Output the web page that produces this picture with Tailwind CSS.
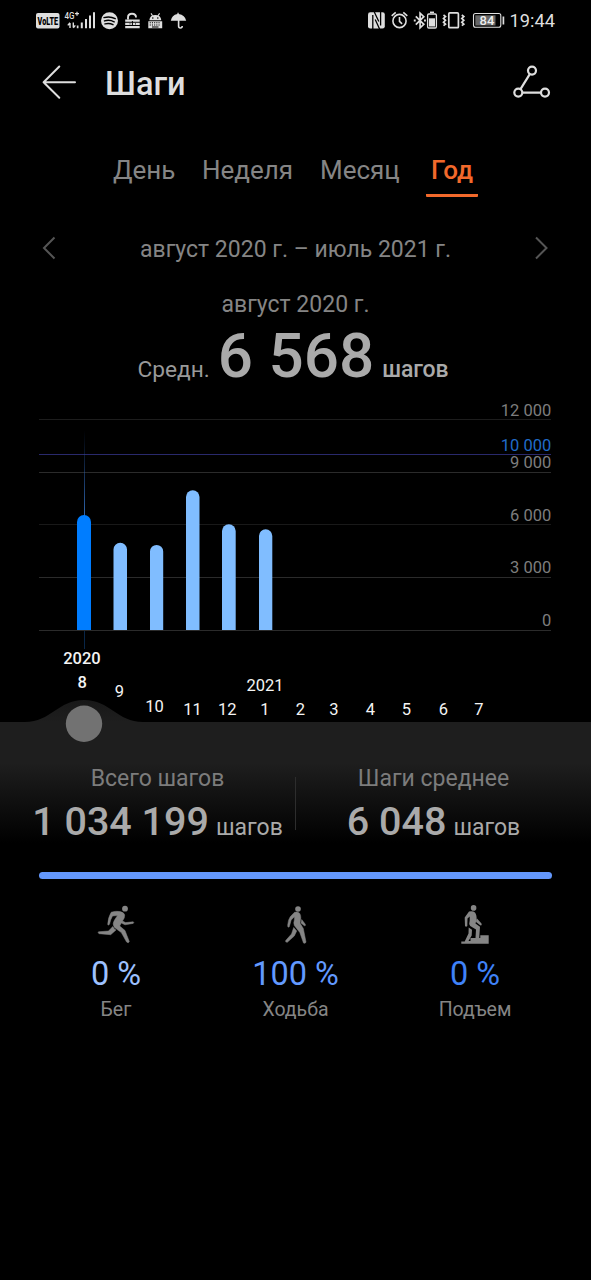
<!DOCTYPE html>
<html lang="ru">
<head>
    <meta charset="UTF-8">
    <meta name="viewport" content="width=device-width, initial-scale=1.0">
    <title>Шаги</title>
    <script src="https://cdn.jsdelivr.net/npm/@tailwindcss/browser@4"></script>
</head>
<body class="bg-black">
    <div class="w-[591px] h-[1280px] bg-black text-[#858585] font-[Roboto,sans-serif] overflow-hidden flex flex-col whitespace-nowrap">

        <!-- status bar -->
        <div class="h-[41px] shrink-0 flex justify-between pl-9 pr-[33px] text-[#dedede]">
            <svg class="w-[152px] h-[41px]" viewBox="36 0 152 41" fill="currentColor">
                <rect x="36" y="13" width="23.5" height="15.6" rx="2"/>
                <text x="37.6" y="24.6" font-size="10" font-weight="900" fill="#000" textLength="20.5" lengthAdjust="spacingAndGlyphs">VoLTE</text>
                <text x="64.5" y="19.4" font-size="9.5" font-weight="500" textLength="10" lengthAdjust="spacingAndGlyphs">4G</text>
                <path d="M75 13.7h4M77 11.8v4" stroke="currentColor" stroke-width="1.2"/>
                <path d="M70 23v5M67.8 25.4l2.2-2.6M73.3 22.5v5M75.3 25.4l-2 2.5" stroke="currentColor" stroke-width="1.4" fill="none"/>
                <path d="M76.800 25.500h1.700v2.800h-1.700zM80.800 22.500h2v5.800h-2zM85 19h2v9.300h-2zM89 15.500h2v12.800h-2zM93 12.200h2v16.100h-2z"/>
                <circle cx="109.5" cy="20.7" r="8.5"/>
                <path d="M104 17.600q6-1.800 11.200 1M104.500 20.900q5-1.500 9.700.9M105 23.900q4.300-1.200 8 .7" fill="none" stroke="#000" stroke-width="1.5" stroke-linecap="round"/>
                <path d="M128 19.500v-2q0-3.700 4-3.700t4 3.700" fill="none" stroke="currentColor" stroke-width="1.9"/>
                <path d="M125.200 19.500h14.500v2.300h-14.500zM125.200 22.800h14.500v2.200h-14.500zM125.200 26h14.500v2.200h-14.500z"/>
                <path d="M132.400 21v4M129.500 23.900h1M135 23.900h1" stroke="#000" stroke-width="1"/>
                <path d="M148.300 28.200v-7h13.900v7zM149.300 20.300q.5-5.300 6-5.300t6 5.300z"/>
                <path d="M151 13.400l1.600 2.400M159.600 13.400l-1.600 2.400" stroke="currentColor" stroke-width="1.1"/>
                <path d="M149.700 22.800h11M149.700 25h11" stroke="#000" stroke-width="1.1" stroke-dasharray="1.1 1.1"/><path d="M152 27h6.500" stroke="#000"/>
                <circle cx="152.800" cy="18" r=".8" fill="#000"/><circle cx="157.800" cy="18" r=".8" fill="#000"/>
                <path d="M170.800 20.700q1-5.800 6.600-6.800v-1.200h1.300v1.200q6.300 1 7.500 6.800z"/>
                <path d="M178.600 20v6q0 2 1.800 2t1.800-2" fill="none" stroke="currentColor" stroke-width="1.6"/>
            </svg>
            <svg class="w-[191px] h-[41px]" viewBox="367 0 191 41" fill="none" stroke="currentColor">
                <rect x="368" y="12.300" width="16.800" height="16.300" rx="2.300" fill="currentColor" stroke="none"/>
                <path d="M372.800 15V29M375.200 19.500L379.600 29M374.300 12L378.800 21.500M380.600 12V25.500" stroke="#000" stroke-width="1.3"/>
                <circle cx="399.500" cy="21" r="6.600" stroke-width="1.6"/>
                <path d="M399.500 17v4.300l2.600 2.500M391.700 15.800l4-3.400M407.300 15.800l-4-3.400" stroke-width="1.6"/>
                <path d="M415.800 16.400l8 7.900-3.700 3.500V13.200l3.700 3.500-8 7.900" stroke-width="1.7"/>
                <path d="M413.800 20.500h1.900M424 20.500h1.900" stroke-width="1.800"/>
                <rect x="427.600" y="14" width="8.800" height="14" rx="1.200" stroke-width="1.3"/>
                <path d="M430 12.300h4" stroke-width="1.5"/><path d="M429 18.300h6v8.200h-6z" fill="currentColor" stroke="none"/>
                <rect x="448.800" y="12.900" width="9.600" height="14.800" rx="1" stroke-width="1.7"/>
                <path d="M443.500 15l2 1.500-2 1.900 2 1.900-2 1.900 2 1.900-2 1.500M461.800 15l2 1.500-2 1.900 2 1.900-2 1.900 2 1.900-2 1.500" stroke-width="1.7"/>
                <rect x="473.500" y="13.500" width="27.300" height="13.800" rx="2" stroke-width="1.1"/>
                <path d="M475.300 15.300h20.200v10.200h-20.200z" fill="#666" stroke="none"/>
                <path d="M503.400 16.500v8" stroke-width="1.7"/>
                <text x="487" y="25" font-size="13" font-weight="500" text-anchor="middle" fill="#eee" stroke="none">84</text>
                <text x="509.500" y="27.200" font-size="19" fill="currentColor" stroke="none" textLength="45.500" lengthAdjust="spacingAndGlyphs">19:44</text>
            </svg>
        </div>

        <!-- header -->
        <header class="h-[84px] shrink-0 flex items-center pl-[42px] pr-10 text-[#dedede]">
            <svg class="w-9 h-9" viewBox="42 65 36 36" fill="none" stroke="currentColor" stroke-width="2" stroke-linecap="round" stroke-linejoin="round">
                <path d="M75 82.200H43.600M59.300 66.500L43.600 82.200l15.700 15.500"/>
            </svg>
            <h1 class="ml-[27px] pt-0.5 text-[32.5px] font-medium">Шаги</h1>
            <svg class="w-[38px] h-9 ml-auto" viewBox="513 65 38 36" fill="none" stroke="currentColor" stroke-width="2.2">
                <circle cx="532" cy="70.600" r="4"/><circle cx="518.300" cy="92.600" r="4"/><circle cx="545" cy="92.600" r="4"/>
                <path d="M529.800 74.100L520.500 89.100M522.400 92.600H541"/>
            </svg>
        </header>

        <!-- period tabs -->
        <nav class="h-[73px] shrink-0 pt-[27px] flex pl-[113px] text-[26px] leading-9">
            <div class="w-[89px]">День</div>
            <div class="w-[118px]">Неделя</div>
            <div class="w-[106px]">Месяц</div>
            <div class="w-[52px] h-[45px] text-center font-medium text-[#f2692b] border-b-3 border-[#f2692b] rounded-[1px]">Год</div>
        </nav>

        <div class="h-[91px] shrink-0 pt-9 flex justify-between px-[42px] text-[23px] leading-8">
            <svg class="w-4 h-[30px]" viewBox="42 234 16 30" fill="none" stroke="#555" stroke-width="2"><path d="M54.500 237.500L44 248l10.500 10.500"/></svg>
            <span>август 2020 г. – июль 2021 г.</span>
            <svg class="w-4 h-[30px]" viewBox="533 234 16 30" fill="none" stroke="#555" stroke-width="2"><path d="M536 237.500L546.500 248 536 258.500"/></svg>
        </div>

        <div class="h-[111px] shrink-0 flex flex-col items-center">
            <div class="text-[23px] leading-8">август 2020 г.</div>
            <div class="flex items-baseline gap-2 pr-[5px] leading-[70px] text-[#aaa]">
                <span class="text-[22.7px] text-[#999]">Средн.</span>
                <span class="text-[62px] font-medium">6 568</span>
                <span class="text-[23px] font-medium tracking-[-0.1px]">шагов</span>
            </div>
        </div>

        <!-- chart with month slider -->
        <svg class="w-[591px] h-[345px] shrink-0" viewBox="0 400 591 345">
            <defs>
                <linearGradient id="cursor" x1="0" y1="430" x2="0" y2="516" gradientUnits="userSpaceOnUse">
                    <stop offset="0" stop-color="#24509c" stop-opacity="0"/><stop offset="1" stop-color="#3068b0"/>
                </linearGradient>
                <linearGradient id="wave" x1="0" y1="700" x2="0" y2="722" gradientUnits="userSpaceOnUse">
                    <stop offset="0" stop-color="#181818"/><stop offset="1" stop-color="#1e1e1e"/>
                </linearGradient>
            </defs>
            <g fill="#2b2b2b">
                <rect x="39" y="419" width="512" height="1" fill="#1d1d1d"/>
                <rect x="39" y="472" width="512" height="1"/>
                <rect x="39" y="524" width="512" height="1" fill="#191919"/>
                <rect x="39" y="577" width="512" height="1"/>
                <rect x="39" y="630" width="512" height="1"/>
                <rect x="39" y="454" width="512" height="1" fill="#29296c"/>
            </g>
            <rect x="84" y="430" width="1" height="86" fill="url(#cursor)"/>
            <rect x="84" y="631" width="1" height="18" fill="#082648"/>
            <path fill="#007dff" d="M77 630V522a7 7 0 0 1 14 0V630z"/>
            <g fill="#80bdff">
                <path d="M113.500 630V549.500a6.750 6.750 0 0 1 13.500 0V630z"/>
                <path d="M150 630V551.500a6.600 6.600 0 0 1 13.200 0V630z"/>
                <path d="M186 630V497a6.750 6.750 0 0 1 13.500 0V630z"/>
                <path d="M222 630V531a6.850 6.850 0 0 1 13.700 0V630z"/>
                <path d="M259 630V536a6.650 6.650 0 0 1 13.300 0V630z"/>
            </g>
            <g font-size="16.5" fill="#7d7d7d" text-anchor="end">
                <text x="551.300" y="416">12 000</text>
                <text x="551.300" y="451" fill="#206cc9">10 000</text>
                <text x="551.300" y="468">9 000</text>
                <text x="551.300" y="521">6 000</text>
                <text x="551.300" y="573">3 000</text>
                <text x="551.300" y="626">0</text>
            </g>
            <g font-size="16.5" fill="#f4f4f4" text-anchor="middle">
                <text x="82" y="663.500" font-weight="500">2020</text>
                <text x="82.200" y="687.500" font-weight="500">8</text>
                <text x="119.300" y="696.500">9</text>
                <text x="154.500" y="712">10</text>
                <text x="192.500" y="715">11</text>
                <text x="227.300" y="715">12</text>
                <text x="265" y="691">2021</text>
                <text x="265" y="715">1</text>
                <text x="300.500" y="715">2</text>
                <text x="334" y="715">3</text>
                <text x="370.500" y="715">4</text>
                <text x="406.300" y="715">5</text>
                <text x="443.300" y="715">6</text>
                <text x="479" y="715">7</text>
            </g>
            <path fill="url(#wave)" d="M0 722H25C51 722 58 700 84 700s33 22 59 22H591V745H0z"/>
            <circle cx="84" cy="723.700" r="18.200" fill="#727272"/>
        </svg>

        <!-- totals -->
        <div class="h-[100px] shrink-0 flex bg-linear-to-b/srgb from-[#1e1e1e] from-18% to-black to-98% text-[#aaa]">
            <div class="w-[295px] pl-5 flex flex-col items-center pt-[18px]">
                <div class="text-[23px] leading-8 text-[#7c7c7c]">Всего шагов</div>
                <div class="flex items-baseline gap-[7px] leading-[54px]">
                    <span class="text-[39.5px] font-medium">1 034 199</span><span class="text-[23px]">шагов</span>
                </div>
            </div>
            <div class="w-px h-[53px] mt-8 bg-[#2d2d2d]"></div>
            <div class="flex-1 pr-5 flex flex-col items-center pt-[18px]">
                <div class="text-[23px] leading-8 text-[#7c7c7c]">Шаги среднее</div>
                <div class="flex items-baseline gap-[7px] leading-[54px]">
                    <span class="text-[39.5px] font-medium">6 048</span><span class="text-[23px]">шагов</span>
                </div>
            </div>
        </div>

        <div class="mt-[27px] ml-[39px] w-[513px] h-[7px] shrink-0 rounded-full bg-[#6397fc]"></div>

        <!-- activity split -->
        <div class="grid grid-cols-[179px_180px_179px] justify-center pt-[23px] text-center text-[19.5px]">
            <div class="flex flex-col items-center">
                <svg class="w-10 h-[42px]" viewBox="96 902 40 42" fill="#858585">
                    <circle cx="125" cy="908.700" r="2.900"/>
                    <path d="M111.200 912.200Q116 910.800 120 911.500Q124 912.300 124.700 915Q125 917.500 122.500 921L125.500 922.600L133.200 921.800Q134.400 922.600 133.200 923.400L125 924.800L121.300 923L119.700 926L125 930.500Q126.700 935 129.300 941.500Q128.500 943.700 126.600 942Q123.500 936.500 121.300 932.600L114.500 927.500Q111.800 924 114.500 920L117.500 915.500L112.500 916Q110.500 919.500 109.600 924Q108.500 926 107.700 924.500Q108 917.500 111.200 912.200zM98.500 931.800L108.500 931L112.800 926.500Q114 929 116 930L110.700 934.700L99 933.700Q97.500 932.700 98.500 931.800z" stroke="#858585" stroke-width=".5"/>
                </svg>
                <div class="mt-[9px] text-[32.5px] leading-[42px] text-[#9dc1ff]">0 %</div>
                <div class="pt-px leading-7">Бег</div>
            </div>
            <div class="flex flex-col items-center">
                <svg class="w-10 h-[42px]" viewBox="276 902 40 42" fill="#858585">
                    <circle cx="298" cy="909" r="2.800"/>
                    <path d="M294.500 912.300Q297.500 911.400 299.500 913.200Q301 915 300.800 918Q300.500 920.500 300 923L303.300 928.500L306 942Q305.500 944 303.500 943L299.800 932.500L294.300 925.500Q293.300 923 294.500 919V916.700L291.200 920L289.300 926.700Q287.500 928.300 287.700 925Q288 920 290.200 916.800zM293.700 927.500L296.700 931L294.300 936L287.300 942.300Q285 942.500 285.700 940.500L291.500 934zM301.700 919.500L305.300 924.300Q306 926 304.300 925.700L301 923z" stroke="#858585" stroke-width=".5"/>
                </svg>
                <div class="mt-[9px] text-[32.5px] leading-[42px] text-[#6299ff]">100 %</div>
                <div class="pt-px leading-7">Ходьба</div>
            </div>
            <div class="flex flex-col items-center">
                <svg class="w-10 h-[42px]" viewBox="455 902 40 42" fill="#858585">
                    <circle cx="473.600" cy="907.900" r="2.800"/>
                    <path d="M469 911.500Q473 910.800 475 912.500Q477 915 476.500 920L475.500 923.500L480 926.700L479.200 938H488.700V943.700H461.300V941.500H464.700L468.500 933.500L468.700 927.500L472 929.700L471.700 935.500L468.500 941H470.500V938H475.500L476 929.500L470.200 926Q468.500 924 469.700 920.500V916.500L467.500 918.500L467.300 926Q466 927.500 465 926L464.700 917.500zM477 918.500L481.500 923.500Q482.300 926 480.200 925.300L476 922zM480.300 935.200H488.700V938.500H480.300z"/>
                </svg>
                <div class="mt-[9px] text-[32.5px] leading-[42px] text-[#3f82f8]">0 %</div>
                <div class="pt-px leading-7">Подъем</div>
            </div>
        </div>
    </div>
</body>
</html>
